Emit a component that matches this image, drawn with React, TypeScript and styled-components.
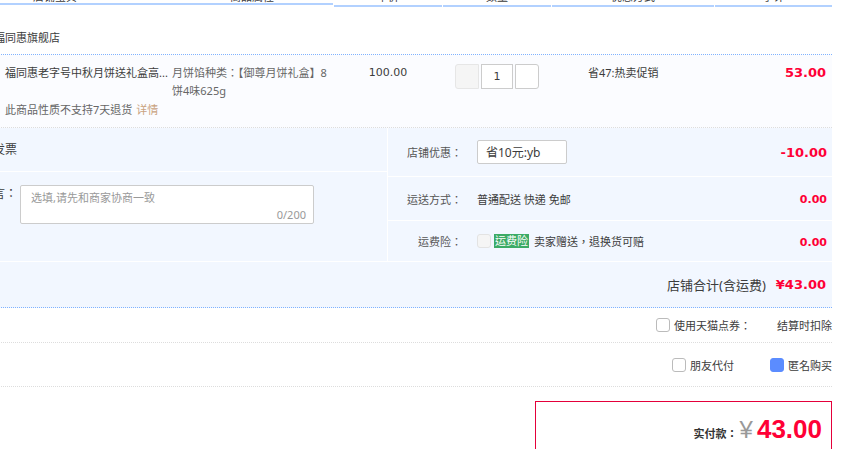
import { FC } from "react";
import styled, { createGlobalStyle } from "styled-components";

const GlobalStyle = createGlobalStyle`
    html, body {
        margin: 0;
        padding: 0;
        overflow: hidden;
        background: #fff;
    }
    body {
        font-family: "Noto Sans", "Noto Sans CJK TC", sans-serif;
        font-size: 11px;
        color: #3c3c3c;
    }
`;

const red = "#ff0036";
const numFont = `"DejaVu Sans", "Noto Sans", sans-serif`;
const cols = [493, 108, 108, 162, 117];

const Page = styled.div`
    width: 992px;
    margin-left: -160px;
    margin-top: -11px;
`;

const HeaderRow = styled.div`
    display: flex;
    gap: 1px;
`;

const HeadCell = styled.div<{ $w: number }>`
    width: ${(p) => p.$w}px;
    height: 16px;
    line-height: 16px;
    text-align: center;
    border-bottom: 2px solid #b2d1ff;
    color: #3c3c3c;
    display: flex;
    justify-content: center;

    &.first {
        justify-content: flex-start;
        padding-left: 193px;
        box-sizing: border-box;
        gap: 153px;
    }
`;

const ShopRow = styled.div`
    padding: 22px 0 7px 121px;
    line-height: 18px;
    font-size: 11px;
    border-bottom: 1px dotted #80b2ff;
`;

const ItemRow = styled.div`
    display: flex;
    gap: 1px;
    background: #fbfcff;
    padding: 9px 0 8px;
    border-bottom: 1px dotted #ddd;
    line-height: 18px;
`;

const Cell = styled.div<{ $w: number }>`
    width: ${(p) => p.$w}px;
    box-sizing: border-box;
`;

const ItemCell = styled(Cell)`
    display: flex;
    padding-left: 165px;
`;

const ItemInfo = styled.div`
    width: 160px;
`;

const Title = styled.div`
    white-space: nowrap;
    color: #3c3c3c;
`;

const Note = styled.div`
    margin-top: 19px;
    color: #666;

    a {
        color: #c9a27e;
        text-decoration: none;
        margin-left: 4px;
    }
`;

const Props = styled.div`
    margin-left: 7px;
    width: 160px;
    color: #666;
`;

const PriceCell = styled(Cell)`
    text-align: center;
    font-family: ${numFont};
    font-size: 11px;
`;

const QtyCell = styled(Cell)`
    display: flex;
    justify-content: center;
    gap: 2px;
`;

const QtyBtn = styled.span<{ $side: "left" | "right"; $disabled?: boolean }>`
    width: 24px;
    height: 25px;
    box-sizing: border-box;
    border: 1px solid ${(p) => (p.$disabled ? "#e6e6e6" : "#ccc")};
    background: ${(p) => (p.$disabled ? "#f5f5f5" : "#fff")};
    border-radius: ${(p) => (p.$side === "left" ? "3px 0 0 3px" : "0 3px 3px 0")};
`;

const QtyInput = styled.span`
    width: 32px;
    height: 25px;
    box-sizing: border-box;
    border: 1px solid #ccc;
    background: #fff;
    display: flex;
    align-items: center;
    justify-content: center;
    font-family: ${numFont};
    font-size: 11px;
`;

const PromoCell = styled(Cell)`
    padding-left: 36px;
`;

const Money = styled.span<{ $size: number }>`
    color: ${red};
    font-family: ${numFont};
    font-weight: bold;
    font-size: ${(p) => p.$size}px;
`;

const SubtotalCell = styled(Cell)`
    text-align: right;
    padding-right: 6px;
`;

const ExtSection = styled.div`
    display: flex;
    border-bottom: 1px solid #fff;
`;

const LeftPanel = styled.div`
    width: 548px;
    border-right: 1px solid #fff;
    box-sizing: border-box;
    display: flex;
    flex-direction: column;
    background: #f2f7ff;
`;

const LeftRow = styled.div<{ $h?: number; $top?: boolean }>`
    display: flex;
    align-items: ${(p) => (p.$top ? "flex-start" : "center")};
    height: ${(p) => (p.$h ? `${p.$h}px` : "auto")};
    flex: ${(p) => (p.$h ? "none" : 1)};
    padding-top: ${(p) => (p.$top ? "13px" : 0)};
    box-sizing: border-box;
    border-bottom: ${(p) => (p.$h ? "1px solid #fff" : "none")};

    label {
        width: 177px;
        text-align: right;
        line-height: 18px;
        font-size: 12px;
    }
`;

const Message = styled.div`
    position: relative;
    margin-left: 3px;
    width: 294px;
    height: 39px;
    box-sizing: border-box;
    border: 1px solid #ccc;
    border-radius: 2px;
    background: #fff;

    textarea {
        border: none;
        outline: none;
        resize: none;
        width: 100%;
        height: 100%;
        box-sizing: border-box;
        padding: 3px 10px 0;
        font-family: inherit;
        font-size: 11px;
        line-height: 18px;
        color: #3c3c3c;
        background: transparent;
    }

    textarea::placeholder {
        color: #999;
    }
`;

const Counter = styled.span`
    position: absolute;
    right: 7px;
    bottom: 1px;
    color: #999;
    font-size: 11px;
    line-height: 14px;
`;

const RightPanel = styled.div`
    flex: 1;
    display: flex;
    flex-direction: column;
`;

const RightRow = styled.div<{ $h: number; $last?: boolean }>`
    height: ${(p) => p.$h}px;
    display: flex;
    align-items: center;
    background: #f2f7ff;
    border-bottom: ${(p) => (p.$last ? "none" : "1px solid #fff")};
`;

const RLabel = styled.span`
    width: 74px;
    text-align: right;
    color: #555;
`;

const RContent = styled.div`
    margin-left: 15px;
    display: flex;
    align-items: center;
    flex: 1;
`;

const RValue = styled.div`
    padding-right: 5px;
`;

const CouponBox = styled.span`
    width: 90px;
    height: 24px;
    box-sizing: border-box;
    border: 1px solid #ccc;
    border-radius: 2px;
    background: #fff;
    display: flex;
    align-items: center;
    padding-left: 8px;
    font-size: 12px;
`;

const Check = styled.span<{ $checked?: boolean; $disabled?: boolean }>`
    display: inline-block;
    width: 14px;
    height: 14px;
    box-sizing: border-box;
    border-radius: 3px;
    border: 1px solid ${(p) => (p.$checked ? "#5b8cff" : p.$disabled ? "#e3e3e3" : "#bbb")};
    background: ${(p) => (p.$checked ? "#5b8cff" : p.$disabled ? "#f5f5f5" : "#fff")};
    flex: none;
`;

const Badge = styled.span`
    margin-left: 3px;
    background: #3cab66;
    color: #fff;
    padding: 0 1px;
    line-height: 14px;
    font-size: 11px;
`;

const Aside = styled.span`
    margin-left: 5px;
`;

const TotalRow = styled.div`
    height: 45px;
    background: #f2f7ff;
    display: flex;
    align-items: center;
    justify-content: flex-end;
    padding-right: 6px;
    gap: 10px;
    border-bottom: 1px dotted #80b2ff;
`;

const TotalLabel = styled.span`
    font-size: 13px;
    color: #3c3c3c;
`;

const OptRow = styled.div<{ $h: number }>`
    height: ${(p) => p.$h}px;
    display: flex;
    align-items: center;
    justify-content: flex-end;
    border-bottom: 1px dotted #ddd;
`;

const Opt = styled.span<{ $gap?: number }>`
    display: flex;
    align-items: center;
    gap: 4px;
    margin-left: ${(p) => p.$gap ?? 0}px;
    color: #3c3c3c;
`;

const PayBox = styled.div`
    margin: 14px 0 0 auto;
    width: 297px;
    height: 80px;
    box-sizing: border-box;
    border: 1px solid #e4003a;
    display: flex;
    justify-content: flex-end;
    align-items: baseline;
    padding: 12px 9px 0 0;
`;

const PayLabel = styled.span`
    font-size: 11px;
    font-weight: bold;
    color: #333;
`;

const Yen = styled.span`
    font-family: "Liberation Sans", Arial, sans-serif;
    font-size: 24px;
    color: #999;
    margin: 0 4px 0 2px;
`;

const PayAmount = styled.span`
    font-family: "Liberation Sans", Arial, sans-serif;
    font-size: 26px;
    font-weight: bold;
    color: ${red};
    line-height: 30px;
`;

const App: FC = () => {
    return (
        <>
            <GlobalStyle />
            <Page>
                <HeaderRow>
                    <HeadCell $w={cols[0]} className="first">
                        <span>店铺宝贝</span>
                        <span>商品属性</span>
                    </HeadCell>
                    <HeadCell $w={cols[1]}>单价</HeadCell>
                    <HeadCell $w={cols[2]}>数量</HeadCell>
                    <HeadCell $w={cols[3]}>优惠方式</HeadCell>
                    <HeadCell $w={cols[4]}>小计</HeadCell>
                </HeaderRow>

                <ShopRow>店铺：福同惠旗舰店</ShopRow>

                <ItemRow>
                    <ItemCell $w={cols[0]}>
                        <ItemInfo>
                            <Title>福同惠老字号中秋月饼送礼盒高...</Title>
                            <Note>
                                此商品性质不支持7天退货<a href="#">详情</a>
                            </Note>
                        </ItemInfo>
                        <Props>月饼馅种类：【御尊月饼礼盒】8饼4味625g</Props>
                    </ItemCell>
                    <PriceCell $w={cols[1]}>100.00</PriceCell>
                    <QtyCell $w={cols[2]}>
                        <QtyBtn $side="left" $disabled />
                        <QtyInput>1</QtyInput>
                        <QtyBtn $side="right" />
                    </QtyCell>
                    <PromoCell $w={cols[3]}>省47:热卖促销</PromoCell>
                    <SubtotalCell $w={cols[4]}>
                        <Money $size={13}>53.00</Money>
                    </SubtotalCell>
                </ItemRow>

                <ExtSection>
                    <LeftPanel>
                        <LeftRow $h={44}>
                            <label>开具发票</label>
                        </LeftRow>
                        <LeftRow $top>
                            <label>给卖家留言：</label>
                            <Message>
                                <textarea placeholder="选填,请先和商家协商一致" />
                                <Counter>0/200</Counter>
                            </Message>
                        </LeftRow>
                    </LeftPanel>
                    <RightPanel>
                        <RightRow $h={48}>
                            <RLabel>店铺优惠：</RLabel>
                            <RContent>
                                <CouponBox>省10元:yb</CouponBox>
                            </RContent>
                            <RValue>
                                <Money $size={13}>-10.00</Money>
                            </RValue>
                        </RightRow>
                        <RightRow $h={43}>
                            <RLabel>运送方式：</RLabel>
                            <RContent>普通配送 快递 免邮</RContent>
                            <RValue>
                                <Money $size={11}>0.00</Money>
                            </RValue>
                        </RightRow>
                        <RightRow $h={40} $last>
                            <RLabel>运费险：</RLabel>
                            <RContent>
                                <Check $disabled />
                                <Badge>运费险</Badge>
                                <Aside>卖家赠送，退换货可赔</Aside>
                            </RContent>
                            <RValue>
                                <Money $size={11}>0.00</Money>
                            </RValue>
                        </RightRow>
                    </RightPanel>
                </ExtSection>

                <TotalRow>
                    <TotalLabel>店铺合计(含运费)</TotalLabel>
                    <Money $size={13}>¥43.00</Money>
                </TotalRow>

                <OptRow $h={34}>
                    <Opt>
                        <Check />
                        使用天猫点券：
                    </Opt>
                    <Opt $gap={26}>结算时扣除</Opt>
                </OptRow>

                <OptRow $h={43}>
                    <Opt>
                        <Check />
                        朋友代付
                    </Opt>
                    <Opt $gap={36}>
                        <Check $checked />
                        匿名购买
                    </Opt>
                </OptRow>

                <PayBox>
                    <PayLabel>实付款：</PayLabel>
                    <Yen>¥</Yen>
                    <PayAmount>43.00</PayAmount>
                </PayBox>
            </Page>
        </>
    );
};

export default App;
